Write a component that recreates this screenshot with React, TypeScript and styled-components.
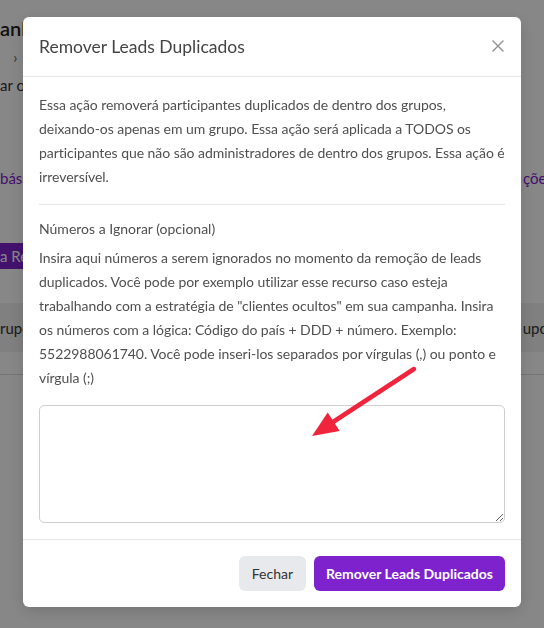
import React from "react";
import styled, { createGlobalStyle } from "styled-components";

const Global = createGlobalStyle`
  html, body {
    margin: 0;
    padding: 0;
    width: 544px;
    height: 628px;
    overflow: hidden;
    background: #ffffff;
    font-family: Lato, "Noto Sans", "Liberation Sans", sans-serif;
  }
  * { box-sizing: border-box; }
`;

/* ---------- background page ---------- */
const Page = styled.div`
  width: 544px;
  height: 628px;
  padding-top: 14px;
  display: flex;
  flex-direction: column;
  color: #333;
`;

const PageTitle = styled.div`
  font-size: 20px;
  line-height: 28px;
  font-weight: 600;
  color: #222;
`;

const Crumb = styled.div`
  margin-top: 5px;
  padding-left: 13px;
  font-size: 16px;
  line-height: 20px;
  color: #666;
`;

const Subtitle = styled.div`
  margin-top: 8px;
  font-size: 15px;
  line-height: 20px;
  color: #333;
`;

const SplitRow = styled.div<{ $top: number; $height: number; $bg?: string }>`
  margin-top: ${(p) => p.$top}px;
  height: ${(p) => p.$height}px;
  display: flex;
  align-items: center;
  justify-content: space-between;
  background: ${(p) => p.$bg || "transparent"};
  font-size: 15px;
  white-space: nowrap;
`;

const TabText = styled.span<{ $shift?: number }>`
  color: #7e22ce;
  margin-right: ${(p) => p.$shift || 0}px;
`;

const CellText = styled.span<{ $shift?: number }>`
  color: #333;
  margin-right: ${(p) => p.$shift || 0}px;
`;

const PageButton = styled.div`
  margin-top: 55px;
  width: 120px;
  height: 26px;
  background: #7e22ce;
  color: #fff;
  font-size: 15px;
  line-height: 26px;
  border-radius: 0 4px 4px 0;
  white-space: nowrap;
`;

const TableRow = styled.div`
  height: 23px;
  border-bottom: 1px solid #dcdcdc;
`;

/* ---------- overlay + modal ---------- */
const Overlay = styled.div`
  position: fixed;
  inset: 0;
  background: rgba(0, 0, 0, 0.47);
  display: flex;
  justify-content: center;
  align-items: flex-start;
  padding-top: 17px;
`;

const Modal = styled.div`
  width: 498px;
  background: #fff;
  border-radius: 6px;
  box-shadow: 0 4px 16px rgba(0, 0, 0, 0.15);
  display: flex;
  flex-direction: column;
`;

const Header = styled.div`
  height: 60px;
  padding: 0 16px;
  display: flex;
  align-items: center;
  justify-content: space-between;
  border-bottom: 1px solid #e6e6e6;
`;

const Title = styled.h2`
  margin: 0;
  font-size: 17.5px;
  font-weight: 400;
  color: #454545;
`;

const CloseBtn = styled.button`
  border: none;
  background: none;
  padding: 0;
  width: 20px;
  height: 20px;
  display: flex;
  align-items: center;
  justify-content: center;
  margin-right: -3px;
  margin-bottom: 1px;
  cursor: pointer;
`;

const Body = styled.div`
  padding: 16px 16px 16px;
  display: flex;
  flex-direction: column;
`;

const Text = styled.p`
  margin: 0;
  font-size: 14px;
  line-height: 24px;
  letter-spacing: -0.05px;
  color: #505050;
`;

const Divider = styled.hr`
  margin: 15px 0 12px;
  border: none;
  border-top: 1px solid #e6e6e6;
`;

const Label = styled.label`
  font-size: 14px;
  line-height: 24px;
  color: #505050;
  margin-bottom: 5px;
`;

const Area = styled.textarea`
  margin-top: 15px;
  width: 100%;
  height: 118px;
  border: 1px solid #cfcfcf;
  border-radius: 5px;
  font-family: inherit;
  font-size: 14px;
  padding: 8px 10px;
  resize: vertical;
  outline: none;
`;

const Footer = styled.div`
  border-top: 1px solid #e6e6e6;
  padding: 16px;
  display: flex;
  justify-content: flex-end;
  gap: 8px;
`;

const Button = styled.button<{ $primary?: boolean }>`
  height: 35px;
  padding: 0 ${(p) => (p.$primary ? 12 : 13)}px;
  border: none;
  border-radius: 6px;
  font-family: inherit;
  font-size: 14px;
  font-weight: ${(p) => (p.$primary ? 700 : 400)};
  background: ${(p) => (p.$primary ? "#7e22ce" : "#e8e9ec")};
  color: ${(p) => (p.$primary ? "#ffffff" : "#333333")};
  cursor: pointer;
`;

const Annotation = styled.svg`
  position: fixed;
  left: 0;
  top: 0;
  width: 544px;
  height: 628px;
  pointer-events: none;
`;

export default function App() {
  return (
    <>
      <Global />
      <Page>
        <PageTitle>anhas</PageTitle>
        <Crumb>›</Crumb>
        <Subtitle>ar os leads</Subtitle>
        <SplitRow $top={73} $height={20}>
          <TabText>básico</TabText>
          <TabText $shift={-9}>ções</TabText>
        </SplitRow>
        <PageButton>a Remover</PageButton>
        <SplitRow $top={34} $height={49} $bg="#f1f1f1">
          <CellText>rupo</CellText>
          <CellText $shift={-4}>upo</CellText>
        </SplitRow>
        <TableRow />
      </Page>
      <Overlay>
        <Modal>
          <Header>
            <Title>Remover Leads Duplicados</Title>
            <CloseBtn aria-label="Fechar">
              <svg width="12" height="12" viewBox="0 0 12 12">
                <path d="M1 1 L11 11 M11 1 L1 11" stroke="#8f8f8f" strokeWidth="1.4" strokeLinecap="round" />
              </svg>
            </CloseBtn>
          </Header>
          <Body>
            <Text>
              Essa ação removerá participantes duplicados de dentro dos grupos, deixando-os apenas em um grupo. Essa ação será aplicada a TODOS os participantes que não são administradores de dentro dos grupos. Essa ação é irreversível.
            </Text>
            <Divider />
            <Label>Números a Ignorar (opcional)</Label>
            <Text>
              Insira aqui números a serem ignorados no momento da remoção de leads duplicados. Você pode por exemplo utilizar esse recurso caso esteja trabalhando com a estratégia de "clientes ocultos" em sua campanha. Insira os números com a lógica: Código do país + DDD + número. Exemplo: 5522988061740. Você pode inseri-los separados por vírgulas (,) ou ponto e vírgula (;)
            </Text>
            <Area />
          </Body>
          <Footer>
            <Button>Fechar</Button>
            <Button $primary>Remover Leads Duplicados</Button>
          </Footer>
        </Modal>
      </Overlay>
      <Annotation viewBox="0 0 544 628">
        <line x1="414" y1="369" x2="333" y2="422" stroke="#f0243c" strokeWidth="4.5" strokeLinecap="round" />
        <polygon points="312,436 339.7,430.9 327.7,412.5" fill="#f0243c" />
      </Annotation>
    </>
  );
}
